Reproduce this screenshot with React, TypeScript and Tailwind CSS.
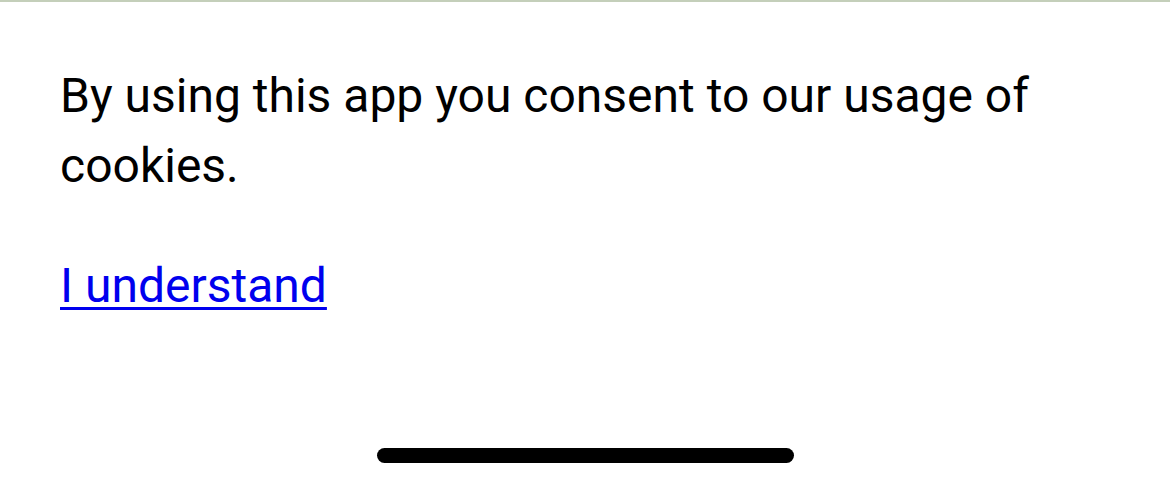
export default function App() {
  return (
    <div className="w-[1170px] h-[487px] bg-white flex flex-col" style={{ fontFamily: "Roboto, 'Liberation Sans', sans-serif" }}>
      <div className="h-[2px] w-full bg-[#c4cfba]" />
      <div className="px-[60px] pt-[59px] flex-1">
        <p className="text-[48px] leading-[70px] text-black">
          By using this app you consent to our usage of cookies.
        </p>
        <a href="#" className="block mt-[50px] text-[48px] leading-[70px] text-[#0000ee] underline underline-offset-[5px] decoration-[3px] w-fit">
          I understand
        </a>
      </div>
      <div className="flex justify-center pb-[24px]">
        <div className="w-[417px] h-[15px] rounded-full bg-black" />
      </div>
    </div>
  );
}
